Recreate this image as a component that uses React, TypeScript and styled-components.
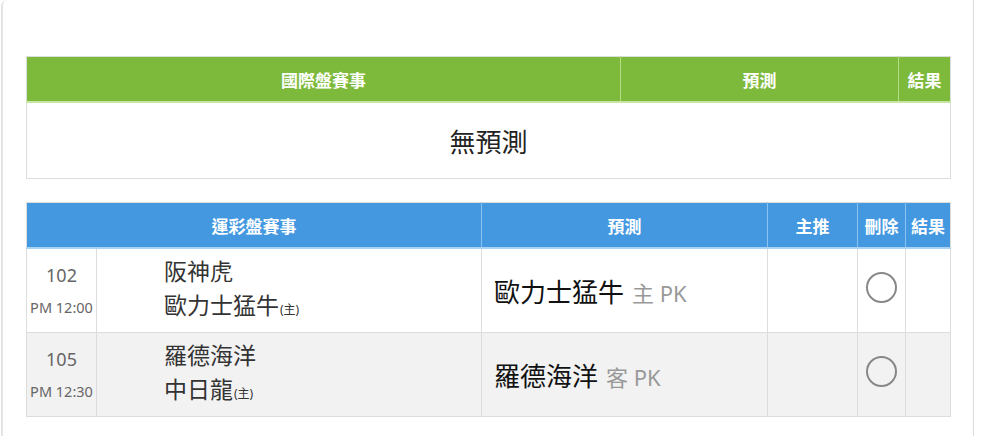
import styled, { createGlobalStyle } from 'styled-components';

const GlobalStyle = createGlobalStyle`
    body {
        margin: 0;
        background: #ffffff;
        font-family: "Noto Sans", "Noto Sans CJK TC", sans-serif;
    }
`;

interface Game {
    no: string;
    time: string;
    away: string;
    home: string;
    pick: string;
    side: string;
    line: string;
}

const games: Game[] = [
    { no: '102', time: 'PM 12:00', away: '阪神虎', home: '歐力士猛牛', pick: '歐力士猛牛', side: '主', line: 'PK' },
    { no: '105', time: 'PM 12:30', away: '羅德海洋', home: '中日龍', pick: '羅德海洋', side: '客', line: 'PK' },
];

const App = () => {
    return (
        <>
            <GlobalStyle />
            <Panel>
                <Table>
                    <colgroup>
                        <col style={{ width: 594 }} />
                        <col style={{ width: 278 }} />
                        <col />
                    </colgroup>
                    <thead>
                        <tr>
                            <Th $color="green">國際盤賽事</Th>
                            <Th $color="green">預測</Th>
                            <Th $color="green">結果</Th>
                        </tr>
                    </thead>
                    <tbody>
                        <tr>
                            <Empty colSpan={3}>無預測</Empty>
                        </tr>
                    </tbody>
                </Table>

                <Table>
                    <colgroup>
                        <col style={{ width: 70 }} />
                        <col style={{ width: 385 }} />
                        <col style={{ width: 286 }} />
                        <col style={{ width: 90 }} />
                        <col style={{ width: 48 }} />
                        <col />
                    </colgroup>
                    <thead>
                        <tr>
                            <Th $color="blue" colSpan={2}>運彩盤賽事</Th>
                            <Th $color="blue">預測</Th>
                            <Th $color="blue">主推</Th>
                            <Th $color="blue">刪除</Th>
                            <Th $color="blue">結果</Th>
                        </tr>
                    </thead>
                    <tbody>
                        {games.map((g, i) => (
                            <Row key={g.no} $odd={i % 2 === 1}>
                                <TimeCell>
                                    <GameNo>{g.no}</GameNo>
                                    <GameTime>{g.time}</GameTime>
                                </TimeCell>
                                <TeamCell>
                                    <Team>{g.away}</Team>
                                    <Team>
                                        {g.home}
                                        <HomeMark>(主)</HomeMark>
                                    </Team>
                                </TeamCell>
                                <PickCell>
                                    {g.pick}
                                    <PickNote>
                                        {g.side} {g.line}
                                    </PickNote>
                                </PickCell>
                                <Td />
                                <Td>
                                    <Radio />
                                </Td>
                                <Td />
                            </Row>
                        ))}
                    </tbody>
                </Table>
            </Panel>
        </>
    );
};

export default App;

// STYLES

const Panel = styled.div`
    width: 973px;
    min-height: 436px;
    box-sizing: border-box;
    margin-left: 1px;
    padding: 56px 0 0 23px;
    border-left: 2px solid #e4e4e4;
    border-right: 1px solid #dcdcdc;
    border-top-left-radius: 6px;
`;

const Table = styled.table`
    width: 925px;
    border-collapse: collapse;
    table-layout: fixed;
    margin-bottom: 23px;
    border: 1px solid #dddddd;
`;

const Th = styled.th<{ $color: 'green' | 'blue' }>`
    height: 44px;
    padding: 0;
    color: #ffffff;
    font-size: 17px;
    font-weight: bold;
    text-align: center;
    background: ${({ $color }) => ($color === 'green' ? '#7dba3b' : '#4398e0')};
    border-left: 1px solid ${({ $color }) => ($color === 'green' ? '#b5dc8a' : '#8cc3f0')};
    border-bottom: 2px solid ${({ $color }) => ($color === 'green' ? '#c6e6a2' : '#a9d3f5')};

    &:first-child {
        border-left: none;
    }
`;

const Empty = styled.td`
    height: 75px;
    padding: 0;
    text-align: center;
    font-size: 26px;
    color: #222222;
`;

const Row = styled.tr<{ $odd: boolean }>`
    background: ${({ $odd }) => ($odd ? '#f2f2f2' : '#ffffff')};
    border-top: 1px solid #dddddd;
`;

const Td = styled.td`
    height: 83px;
    padding: 0;
    text-align: center;
    border-left: 1px solid #dddddd;
`;

const TimeCell = styled(Td)`
    border-left: none;
    color: #666666;
`;

const GameNo = styled.div`
    font-size: 18px;
    line-height: 22px;
    margin-bottom: 11px;
`;

const GameTime = styled.div`
    font-size: 14.5px;
    line-height: 20px;
`;

const TeamCell = styled(Td)`
    text-align: left;
    padding-left: 67px;
`;

const Team = styled.div`
    font-size: 23px;
    line-height: 34px;
    color: #333333;
`;

const HomeMark = styled.span`
    font-size: 12px;
    margin-left: 1px;
`;

const PickCell = styled(Td)`
    text-align: left;
    padding-left: 12px;
    font-size: 26px;
    color: #111111;
`;

const PickNote = styled.span`
    margin-left: 8px;
    font-size: 22px;
    color: #999999;
`;

const Radio = styled.span`
    display: inline-block;
    width: 27px;
    height: 27px;
    border: 2px solid #888888;
    border-radius: 50%;
    margin-top: -6px;
    vertical-align: middle;
`;
